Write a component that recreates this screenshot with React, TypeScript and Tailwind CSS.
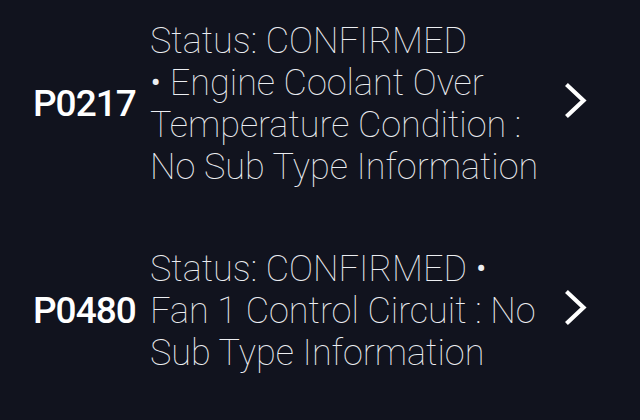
import React from "react";

const rows = [
  {
    code: "P0217",
    text: "Status: CONFIRMED •\u00A0Engine Coolant Over Temperature Condition : No Sub Type Information",
  },
  {
    code: "P0480",
    text: "Status: CONFIRMED • Fan 1 Control Circuit : No Sub Type Information",
  },
];

function Chevron() {
  return (
    <svg width="26" height="38" viewBox="0 0 26 38" fill="none">
      <path d="M5 4 L20.5 18.5 L5 33" stroke="white" strokeWidth="4.2" strokeLinecap="square" strokeLinejoin="miter" />
    </svg>
  );
}

export default function App() {
  return (
    <div className="w-[640px] h-[420px] bg-[#11131e] flex flex-col overflow-hidden font-['Roboto',sans-serif] antialiased">
      {rows.map((r) => (
        <div key={r.code} className="h-[207px] flex items-center pl-[33px]">
          <div className="w-[117px] shrink-0 text-white text-[37px] font-medium tracking-[-1px] leading-none">
            {r.code}
          </div>
          <div className="w-[392px] shrink-0 text-[#eceef2] text-[36px] font-thin leading-[42px]">
            {r.text}
          </div>
          <div className="ml-[21px] -mt-[5px] flex items-center">
            <Chevron />
          </div>
        </div>
      ))}
    </div>
  );
}
